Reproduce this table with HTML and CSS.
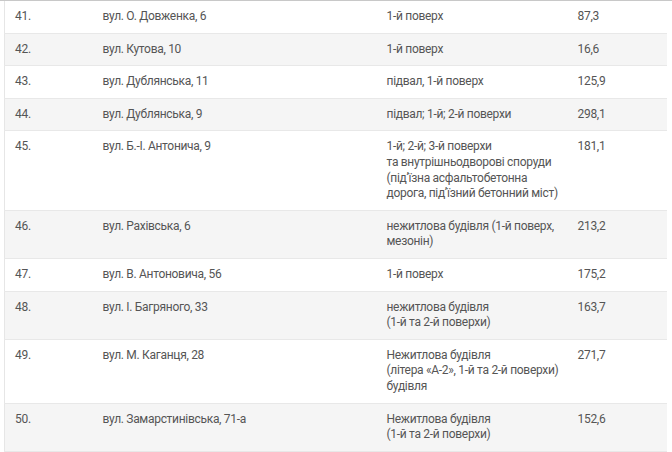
FILE: index.html
```html
<!DOCTYPE html>
<html lang="uk">
<head>
<meta charset="utf-8">
<link rel="stylesheet" href="styles.css">
</head>
<body>
<div class="topline"></div>
<table class="tbl">
<colgroup><col class="c-num"><col class="c-addr"><col class="c-desc"><col class="c-area"></colgroup>
<tbody>
<tr><td>41.</td><td>вул. О. Довженка, 6</td><td>1-й поверх</td><td>87,3</td></tr>
<tr><td>42.</td><td>вул. Кутова, 10</td><td>1-й поверх</td><td>16,6</td></tr>
<tr><td>43.</td><td>вул. Дублянська, 11</td><td>підвал, 1-й поверх</td><td>125,9</td></tr>
<tr><td>44.</td><td>вул. Дублянська, 9</td><td>підвал; 1-й; 2-й поверхи</td><td>298,1</td></tr>
<tr><td>45.</td><td>вул. Б.-І. Антонича, 9</td><td>1-й; 2-й; 3-й поверхи<br>та внутрішньодворові споруди<br>(під’їзна асфальтобетонна<br>дорога, під’їзний бетонний міст)</td><td>181,1</td></tr>
<tr><td>46.</td><td>вул. Рахівська, 6</td><td>нежитлова будівля (1-й поверх,<br>мезонін)</td><td>213,2</td></tr>
<tr><td>47.</td><td>вул. В. Антоновича, 56</td><td>1-й поверх</td><td>175,2</td></tr>
<tr><td>48.</td><td>вул. І. Багряного, 33</td><td>нежитлова будівля<br>(1-й та 2-й поверхи)</td><td>163,7</td></tr>
<tr><td>49.</td><td>вул. М. Каганця, 28</td><td>Нежитлова будівля<br>(літера «А-2», 1-й та 2-й поверхи)<br>будівля</td><td>271,7</td></tr>
<tr><td>50.</td><td>вул. Замарстинівська, 71-а</td><td>Нежитлова будівля<br>(1-й та 2-й поверхи)</td><td>152,6</td></tr>
</tbody>
</table>
</body>
</html>
```
FILE: styles.css
```css
html, body {
  margin: 0;
  padding: 0;
  background: #fff;
}
.topline {
  height: 1px;
  background: #c8c8c8;
}
.tbl {
  margin-left: 4px;
  width: 662px;
  border-collapse: collapse;
  table-layout: fixed;
  border-left: 1px solid #e6e6e6;
  font-family: "Roboto", "Open Sans", sans-serif;
  font-size: 12px;
  letter-spacing: -0.3px;
  line-height: 15.6px;
  color: #555;
}
.c-num { width: 88px; }
.c-addr { width: 284px; }
.c-desc { width: 191px; }
.c-area { width: 99px; }
.tbl td {
  padding: 8px 10px;
  vertical-align: top;
  border-bottom: 1px solid #e8e8e8;
  white-space: nowrap;
}
.tbl tr:nth-child(even) td {
  background: #f5f5f5;
}
```
